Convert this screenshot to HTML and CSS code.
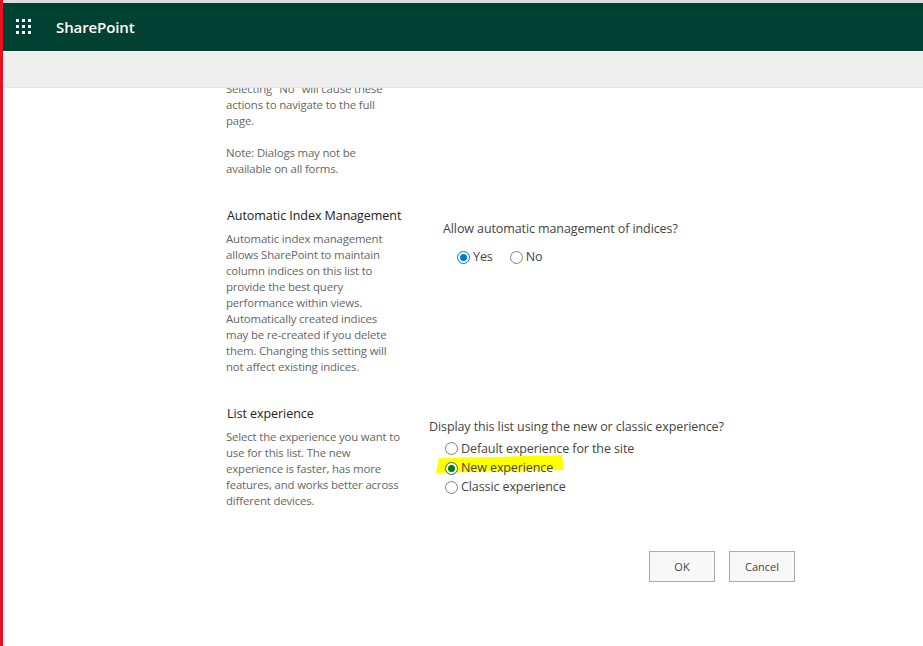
FILE: index.html
```html
<!DOCTYPE html>
<html lang="en">
<head>
<meta charset="utf-8">
<title>List settings</title>
<link rel="stylesheet" href="styles.css">
</head>
<body>
<div class="edge"></div>
<div class="app">
  <header class="suite">
    <svg class="waffle" width="15" height="15" viewBox="0 0 15 15" fill="#fff">
      <rect x="0" y="0" width="3" height="3"/><rect x="6" y="0" width="3" height="3"/><rect x="12" y="0" width="3" height="3"/>
      <rect x="0" y="6" width="3" height="3"/><rect x="6" y="6" width="3" height="3"/><rect x="12" y="6" width="3" height="3"/>
      <rect x="0" y="12" width="3" height="3"/><rect x="6" y="12" width="3" height="3"/><rect x="12" y="12" width="3" height="3"/>
    </svg>
    <span class="brand">SharePoint</span>
  </header>
  <div class="commandbar"></div>
  <main class="content">
    <div class="scroller">
      <section class="row row-dialogs">
        <div class="info">
          <p class="desc">Selecting "No" will cause these actions to navigate to the full page.</p>
          <p class="desc note">Note: Dialogs may not be available on all forms.</p>
        </div>
      </section>
      <section class="row row-index">
        <div class="info">
          <h2 class="title">Automatic Index Management</h2>
          <p class="desc">Automatic index management allows SharePoint to maintain column indices on this list to provide the best query performance within views. Automatically created indices may be re-created if you delete them. Changing this setting will not affect existing indices.</p>
        </div>
        <div class="control control-index">
          <p class="question">Allow automatic management of indices?</p>
          <div class="inline-options">
            <label class="option"><span class="radio radio-blue"></span>Yes</label>
            <label class="option"><span class="radio"></span>No</label>
          </div>
        </div>
      </section>
      <section class="row row-list">
        <div class="info">
          <h2 class="title">List experience</h2>
          <p class="desc">Select the experience you want to use for this list. The new experience is faster, has more features, and works better across different devices.</p>
        </div>
        <div class="control control-list">
          <p class="question">Display this list using the new or classic experience?</p>
          <div class="stack-options">
            <label class="option"><span class="radio"></span>Default experience for the site</label>
            <label class="option highlighted">
              <svg class="marker" width="132" height="20" viewBox="0 0 132 20"><path d="M4 3 L60 2 L127 0 L129 15 L70 16 L1 18 Z" fill="#ffff00"/></svg>
              <span class="radio radio-green"></span>New experience</label>
            <label class="option"><span class="radio"></span>Classic experience</label>
          </div>
        </div>
      </section>
      <div class="actions">
        <button class="btn" type="button">OK</button>
        <button class="btn" type="button">Cancel</button>
      </div>
    </div>
  </main>
</div>
</body>
</html>
```
FILE: styles.css
```css
* { box-sizing: border-box; }
html, body { height: 100%; }
body {
  margin: 0;
  display: flex;
  height: 646px;
  overflow: hidden;
  background: #fff;
  font-family: "Open Sans", "Noto Sans", sans-serif;
  color: #444;
}
.edge { width: 3px; flex: none; background: #e81123; }
.app {
  flex: 1;
  min-width: 0;
  display: flex;
  flex-direction: column;
  padding-top: 3px;
  background: #fff;
}
.suite {
  height: 48px;
  flex: none;
  background: #014132;
  display: flex;
  align-items: center;
  padding-left: 13px;
  box-shadow: 0 -3px 0 #dcdcdc;
}
.waffle { flex: none; margin-bottom: 1px; }
.brand {
  margin-left: 25px;
  color: #fff;
  font-size: 15px;
  font-weight: 600;
  letter-spacing: -0.1px;
}
.commandbar {
  height: 36px;
  flex: none;
  margin-top: 1px;
  background: #eeeeee;
  border-bottom: 1px solid #e6e6e6;
}
.content { flex: 1; overflow: hidden; min-height: 0; }
.scroller { margin-top: -7px; padding-left: 223px; }
.row { display: flex; }
.row-dialogs { height: 126px; }
.row-index { height: 198px; }
.row-list { height: 146px; }
.info { width: 175px; flex: none; }
.title {
  margin: 0 0 6px 1px;
  font-size: 12.5px;
  line-height: 18px;
  font-weight: 400;
  color: #222;
  white-space: nowrap;
  letter-spacing: -0.06px;
}
.desc {
  margin: 0;
  font-size: 11.4px;
  line-height: 16px;
  color: #666;
  letter-spacing: -0.15px;
}
.note { margin-top: 16px; }
.question {
  margin: 0;
  font-size: 12.5px;
  line-height: 18px;
  color: #444;
  white-space: nowrap;
  letter-spacing: -0.1px;
}
.control-index { margin-left: 42px; padding-top: 13px; }
.control-list { margin-left: 28px; padding-top: 13px; }
.inline-options { display: flex; gap: 17px; margin-top: 10px; padding-left: 14px; }
.stack-options { display: flex; flex-direction: column; margin-top: 3px; padding-left: 16px; }
.stack-options .option { height: 19.4px; }
.option {
  position: relative;
  display: flex;
  align-items: center;
  gap: 3px;
  font-size: 12.5px;
  line-height: 18px;
  color: #444;
  white-space: nowrap;
  letter-spacing: -0.1px;
}
.radio {
  position: relative;
  width: 13px;
  height: 13px;
  flex: none;
  border: 1px solid #808080;
  border-radius: 50%;
  background: #fff;
}
.radio-blue { border-color: #0078d4; }
.radio-blue::after, .radio-green::after {
  content: "";
  position: absolute;
  inset: 2px;
  border-radius: 50%;
  background: #0078d4;
}
.radio-green { border-color: #1c7a1c; }
.radio-green::after { background: #0a7a0a; }
.highlighted { z-index: 0; }
.marker { position: absolute; left: -10px; top: -3px; z-index: -1; }
.actions {
  display: flex;
  justify-content: flex-end;
  gap: 14px;
  width: 569px;
}
.btn {
  width: 66px;
  height: 31px;
  padding: 0;
  border: 1px solid #ababab;
  background: #f8f8f8;
  font: 400 11px "Open Sans", "Noto Sans", sans-serif;
  color: #444;
}
```
